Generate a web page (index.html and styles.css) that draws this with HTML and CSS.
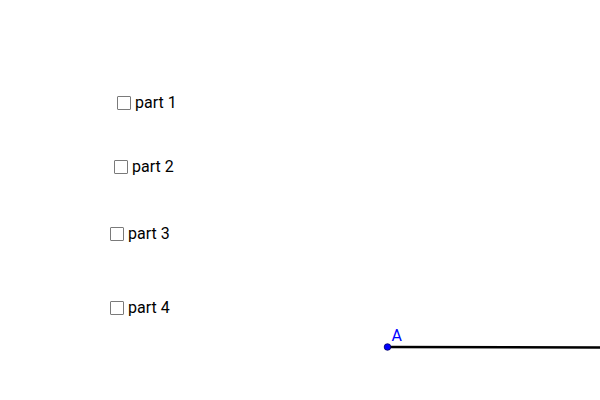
FILE: index.html
```html
<!DOCTYPE html>
<html>
<head>
<meta charset="utf-8">
<link rel="stylesheet" href="styles.css">
</head>
<body>
<div class="canvas">
  <svg class="drawing" width="600" height="400" viewBox="0 0 600 400">
    <line x1="387" y1="347" x2="600" y2="347.6" stroke="#000" stroke-width="2.5"/>
    <circle cx="387.5" cy="347" r="3.3" fill="#0000ff" stroke="#000060" stroke-width="0.8"/>
    <text x="391.5" y="341" class="label">A</text>
  </svg>
  <label class="cb" style="left:117px;top:94px"><span class="box"></span><span class="txt">part 1</span></label>
  <label class="cb" style="left:114px;top:158px"><span class="box"></span><span class="txt">part 2</span></label>
  <label class="cb" style="left:110px;top:225px"><span class="box"></span><span class="txt">part 3</span></label>
  <label class="cb" style="left:110px;top:299px"><span class="box"></span><span class="txt">part 4</span></label>
</div>
</body>
</html>
```
FILE: styles.css
```css
html, body {
  margin: 0;
  padding: 0;
  background: #fff;
}
.canvas {
  position: relative;
  width: 600px;
  height: 400px;
  overflow: hidden;
  font-family: Roboto, "Liberation Sans", sans-serif;
}
.drawing {
  position: absolute;
  left: 0;
  top: 0;
}
.label {
  font-family: Roboto, "Liberation Sans", sans-serif;
  font-size: 16px;
  fill: #0000ff;
}
.cb {
  position: absolute;
  display: flex;
  align-items: center;
  gap: 4px;
  height: 18px;
}
.box {
  width: 12px;
  height: 12px;
  border: 1px solid #7a7a7a;
  border-radius: 1px;
  background: #fff;
}
.txt {
  font-size: 16px;
  color: #000;
  line-height: 18px;
}
```
